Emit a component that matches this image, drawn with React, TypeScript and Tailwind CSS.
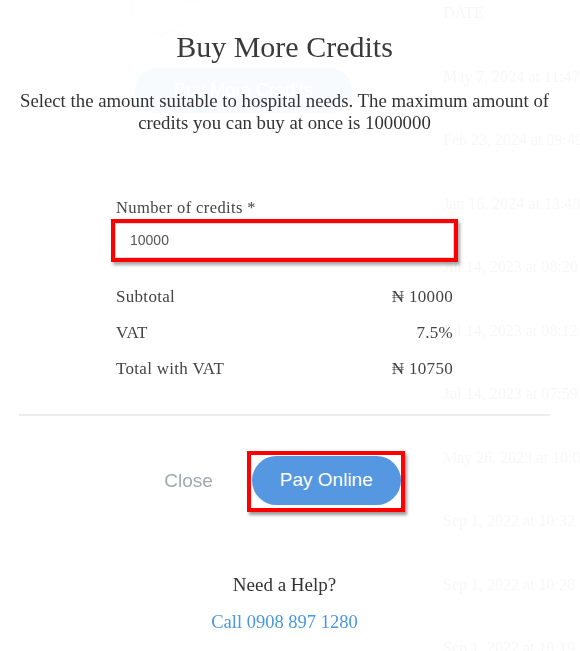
import React from "react";

const dates = [
  "DATE",
  "May 7, 2024 at 11:47",
  "Feb 23, 2024 at 09:49",
  "Jan 16, 2024 at 13:48",
  "Jul 14, 2023 at 08:20",
  "Jul 14, 2023 at 08:12",
  "Jul 14, 2023 at 07:59",
  "May 26, 2023 at 10:04",
  "Sep 1, 2022 at 10:32",
  "Sep 1, 2022 at 10:28",
  "Sep 1, 2022 at 10:19",
];

const serif = { fontFamily: '"Liberation Serif", "Times New Roman", serif' };
const sans = { fontFamily: '"Liberation Sans", Arial, sans-serif' };

function Background() {
  return (
    <div className="flex h-full w-full" style={serif}>
      <div className="relative w-[443px] shrink-0">
        <svg
          className="absolute left-[130px] top-[-40px]"
          width="100"
          height="80"
          viewBox="0 0 100 80"
          fill="none"
          stroke="#cfd9ec"
          strokeWidth="2"
        >
          <path d="M2 40 L2 58 L30 76 L62 60 L62 50" />
          <path d="M26 44 C40 38 52 48 64 40" />
          <ellipse cx="64" cy="20" rx="24" ry="22" stroke="#b9d3f5" />
        </svg>
        <div
          className="absolute left-[135px] top-[68px] flex h-[45px] w-[217px] items-center justify-center rounded-full bg-[#4a90e2] text-[18px] text-white"
          style={sans}
        >
          Buy More Credits
        </div>
      </div>
      <div className="flex flex-col pt-[1px] text-[16px] text-[#444]">
        {dates.map((d) => (
          <div key={d} className="h-[63.5px] shrink-0 whitespace-nowrap">
            {d}
          </div>
        ))}
      </div>
    </div>
  );
}

export default function App() {
  return (
    <div className="relative h-[651px] w-[580px] overflow-hidden bg-white">
      <div className="absolute inset-0 opacity-[0.04]">
        <Background />
      </div>
      <div className="absolute left-0 top-0 flex h-full w-[569px] flex-col items-center text-[#333]" style={serif}>
        <h1 className="mt-[29px] text-[30px] leading-[36px] text-[#3a3a3a]">Buy More Credits</h1>
        <p className="mt-[25px] w-[560px] text-center text-[18.8px] leading-[22px] text-[#333]">
          Select the amount suitable to hospital needs. The maximum amount of credits you can buy at once is 1000000
        </p>
        <div className="mt-[64px] flex w-[347px] flex-col">
          <label className="pl-[5px] text-[16.5px] leading-[20px] tracking-[0.4px] text-[#444]">Number of credits *</label>
          <div className="mt-[1px] border-[4px] border-[#ff0000] shadow-[2px_3px_3px_rgba(0,0,0,0.35)]">
            <div
              className="flex h-[35px] items-center border border-[#d6d9de] pl-[14px] text-[14px] text-[#555]"
              style={sans}
            >
              10000
            </div>
          </div>
          <div className="mt-[17px] flex flex-col px-[5px] text-[17px] tracking-[0.3px] text-[#444]">
            <div className="flex h-[36px] items-center justify-between">
              <span>Subtotal</span>
              <span>₦ 10000</span>
            </div>
            <div className="flex h-[36px] items-center justify-between">
              <span>VAT</span>
              <span>7.5%</span>
            </div>
            <div className="flex h-[36px] items-center justify-between">
              <span>Total with VAT</span>
              <span>₦ 10750</span>
            </div>
          </div>
        </div>
        <div className="mt-[27px] h-[2px] w-[531px] bg-[#ececec]" />
        <div className="mt-[35px] flex items-center gap-[34px]" style={sans}>
          <span className="text-[19px] text-[#a3a7b0]">Close</span>
          <div className="border-[4px] border-[#ff0000] shadow-[2px_3px_3px_rgba(0,0,0,0.4)]">
            <div className="flex h-[53px] w-[150px] items-start overflow-hidden">
              <div className="ml-[1px] mt-[1px] flex h-[49px] w-[149px] items-center justify-center rounded-full bg-[#5597e1] text-[19px] text-white">
                Pay Online
              </div>
            </div>
          </div>
        </div>
        <div className="mt-[62px] text-[19px] leading-[22px] text-[#333]">Need a Help?</div>
        <div className="mt-[15px] text-[18.5px] leading-[22px] text-[#4a97de]">Call 0908 897 1280</div>
      </div>
    </div>
  );
}
